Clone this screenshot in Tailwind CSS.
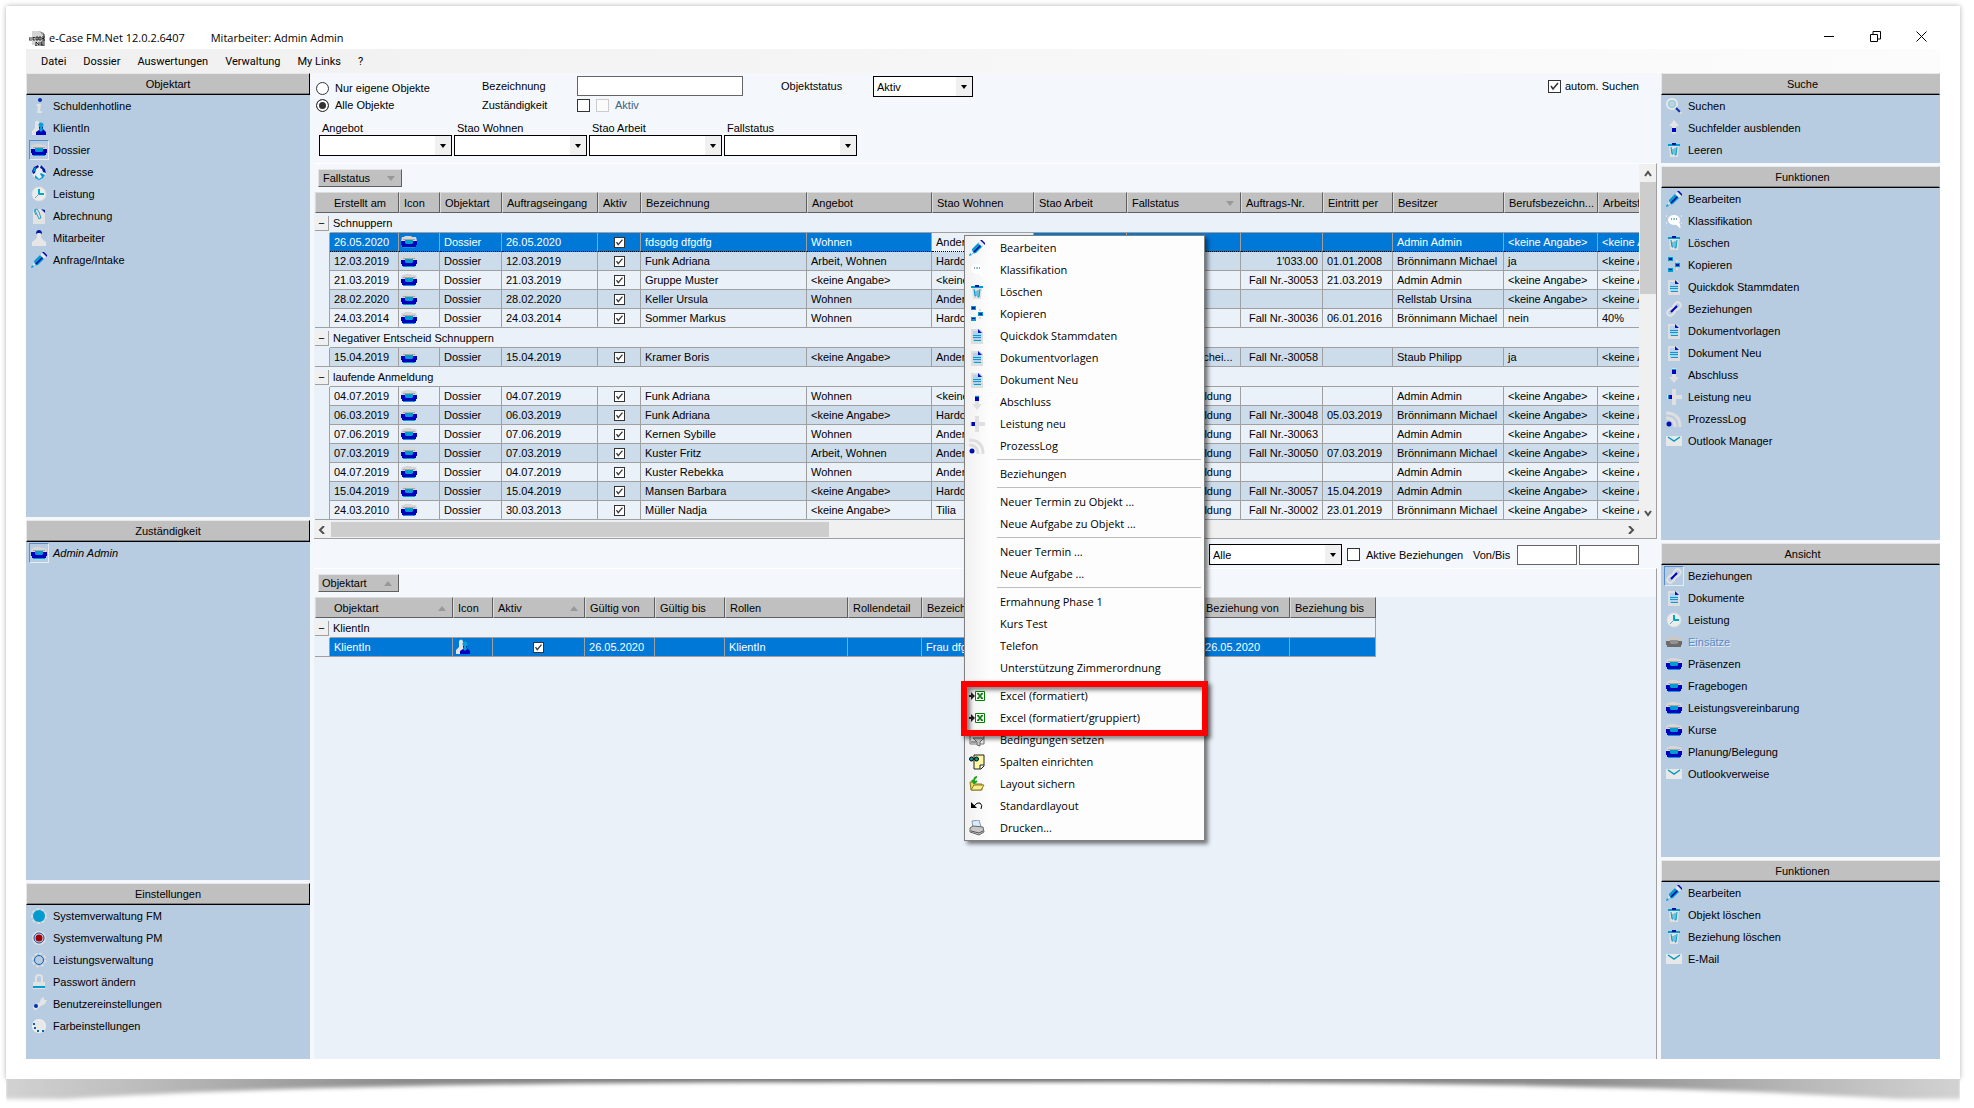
<!DOCTYPE html>
<html lang="de">
<head>
  <meta charset="UTF-8">
  <meta name="viewport" content="width=device-width, initial-scale=1.0">
  <title>e-Case FM.Net</title>
  <script src="https://cdn.jsdelivr.net/npm/@tailwindcss/browser@4"></script>
</head>
<body class="relative bg-white font-['Liberation_Sans',sans-serif] text-[11px] leading-4 text-black">

  <!-- Icons -->
  <svg class="hidden">
    <symbol id="i-app" viewBox="0 0 16 16"><path d="M3 1h8l4 4v10H3z" fill="#d4d4d4"/><path d="M10 1l5 5V3z" fill="#888"/><path d="M15 4v12H6" fill="none" stroke="#333"/><path d="M0 8h3M0 8v2h3M4 7.500h2M4 7v3h2M7 7h2v3H7zM10 7v3h2V7zM13 7h3M13 8.500h2M13 10h3M7 12v4M7 12l3 3v-3M12 12h2M12 14h2M12 12v3h2" stroke="#000" stroke-width=".8" fill="none"/></symbol>
    <symbol id="i-info" viewBox="0 0 16 16"><circle cx="9" cy="2" r="2" fill="#0a2fb0"/><path d="M6 6h4l-1 7h2v2H6l1-7H5z" fill="#e2e2e2"/></symbol>
    <symbol id="i-client" viewBox="0 0 16 16"><path d="M4 2q2-3 4 0v4l3 5v4H1v-4l3-3z" fill="#e4e4e4"/><circle cx="10" cy="5" r="2.500" fill="#0a9fd4"/><path d="M8 7h4v2l3 3v3H5v-3l3-2z" fill="#0000c0"/><path d="M9 7h2l1 3-2 2-2-2z" fill="#0a9fd4"/></symbol>
    <symbol id="i-folder" viewBox="0 0 16 16"><path d="M0 7l1-4h2l1-1h6l1 1h4l1 4z" fill="#d6d6d6"/><path d="M2 5h12v1H2z" fill="#a8a8a8"/><path d="M0 7h16v4h-1v2H1v-2H0z" fill="#0000c0"/><path d="M4 6h8v3l-1 1H5L4 9z" fill="#009cd0"/><path d="M2 13h12v1H2z" fill="#009cd0"/></symbol>
    <symbol id="i-folder-off" viewBox="0 0 16 16"><path d="M0 7l1-4h2l1-1h6l1 1h4l1 4z" fill="#c8c8c8"/><path d="M0 7h16v4h-1v2H1v-2H0z" fill="#6b6b6b"/><path d="M4 6h8v3l-1 1H5L4 9z" fill="#929292"/></symbol>
    <symbol id="i-globe" viewBox="0 0 16 16"><circle cx="8" cy="8" r="7" fill="#e8eef2"/><path d="M3 3l4-2 1 2-3 2-1 4-2 1-1-3zM10 1l4 4 1 4-3-1-1-3-2-1z" fill="#0018a8"/><path d="M4 11l4 4 3-2-2-3 1-1 4 2-2 3-4 2-4-2zM3 4l2-1-1 4-2 1z" fill="#009cd0"/></symbol>
    <symbol id="i-clock" viewBox="0 0 16 16"><circle cx="8" cy="8" r="7" fill="#ececec" stroke="#dcdcdc" stroke-dasharray="2 1"/><path d="M8 3v5h5" stroke="#00a8c0" stroke-width="2" fill="none"/><path d="M8 8l-4 4" stroke="#6ac"/></symbol>
    <symbol id="i-bill" viewBox="0 0 16 16"><path d="M2 1h9l3 3v12H2z" fill="#e2e2e2"/><path d="M10 1l4 1v3z" fill="#0018a8"/><path d="M4 2l4 9 2-1-2-6-2-3-3 1 2 5" fill="none" stroke="#2aa0c8"/></symbol>
    <symbol id="i-person" viewBox="0 0 16 16"><path d="M6 3h4v4l1 2 4 3v4H1v-4l4-3 1-2z" fill="#e6e6e6"/><path d="M5 4q0-4 3-4t3 4l-2-1H7z" fill="#0018a8"/></symbol>
    <symbol id="i-pen" viewBox="0 0 16 16"><path d="M3 9l7-7 4 4-7 7-4 1z" fill="#009cd0"/><path d="M5 12l7-7" stroke="#0000a0" stroke-width="1.500"/><path d="M9 3l2-2 4 4-2 2z" fill="#e8e8e8"/><path d="M11 0h2l3 3v2z" fill="#0000b0"/><path d="M3 10l-1 3 3 1" fill="#e8e8e8"/><path d="M0 16l1-3 2 2z" fill="#009cd0"/></symbol>
    <symbol id="i-search" viewBox="0 0 16 16"><circle cx="6" cy="6" r="5" fill="#b9d4e4" stroke="#e8e8e8" stroke-width="2"/><circle cx="6" cy="6" r="3.500" fill="none" stroke="#8cc"/><path d="M10 10l4 4" stroke="#1030b0" stroke-width="2"/><path d="M14 14l2 2" stroke="#ddd" stroke-width="2"/></symbol>
    <symbol id="i-up" viewBox="0 0 16 16"><path d="M8 0l5 6h-3v7H6V6H3z" fill="#e4e4e4"/><path d="M6 8h4v4H6z" fill="#0000c0"/><path d="M6 12h4v2H6z" fill="#dcdcdc"/></symbol>
    <symbol id="i-trash" viewBox="0 0 16 16"><path d="M3 3h10l-1 12H4z" fill="#e0e0e0"/><path d="M2 2h12v2H2z" fill="#009cd0"/><path d="M6 1h4v2H6z" fill="#0018a8"/><path d="M5 5l1 7h1V7M11 5l-1 8H9V6" stroke="#009cd0" fill="none"/></symbol>
    <symbol id="i-bubble" viewBox="0 0 16 16"><ellipse cx="8" cy="7" rx="6" ry="5" fill="#fff"/><path d="M10 11l4 4v-1l-1-4zM0 3h1M15 3h1M0 10h1M15 10h1" fill="#fff" stroke="#fff"/><path d="M5 6h1M10 6h1" stroke="#336"/><path d="M7 6h2" stroke="#00a0a0"/></symbol>
    <symbol id="i-copy" viewBox="0 0 16 16"><path d="M2 0h5v4H2zM2 11h5v4H2zM9 6h5v4H9z" fill="#009cd0"/><path d="M3 1h3v2H3zM3 12h3v1H3zM10 7h3v2h-3z" fill="#0018a8"/><path d="M11 3v2M11 11v2" stroke="#ddd" stroke-width="2"/></symbol>
    <symbol id="i-doc" viewBox="0 0 16 16"><path d="M2 1h9l3 3v12H2z" fill="#dedede"/><path d="M4 3h5l3 3v7H4z" fill="#b4d2f0"/><path d="M9 1l4 4H9z" fill="#0018b8"/><path d="M4 7.500h8M4 9.500h8M5 12.500h7" stroke="#009cd0"/></symbol>
    <symbol id="i-link" viewBox="0 0 16 16"><rect x="8" y="1" width="6" height="8" rx="3" transform="rotate(45 11 5)" fill="none" stroke="#e2e2e2" stroke-width="2"/><rect x="2" y="7" width="6" height="8" rx="3" transform="rotate(45 5 11)" fill="none" stroke="#e2e2e2" stroke-width="2"/><path d="M5 11l6-6" stroke="#0000c0" stroke-width="2"/></symbol>
    <symbol id="i-down" viewBox="0 0 16 16"><path d="M6 1h4v9h3l-5 6-5-6h3z" fill="#e0e0e0"/><path d="M6 3h4v4H6z" fill="#0000c0"/><path d="M6 2h4v1H6z" fill="#009cd0"/></symbol>
    <symbol id="i-plus" viewBox="0 0 16 16"><path d="M6 0h4v6h6v4h-6v6H6v-6H1V6h5z" fill="#e0e0e0"/><path d="M3 6h3v4H3z" fill="#0000c0"/><path d="M2 6h1v4H2z" fill="#009cd0"/></symbol>
    <symbol id="i-feed" viewBox="0 0 16 16"><path d="M0 2q14 0 14 14M0 7q9 0 9 9" fill="none" stroke="#dedede" stroke-width="3"/><circle cx="3" cy="13" r="2.500" fill="#0010b0"/></symbol>
    <symbol id="i-mail" viewBox="0 0 16 16"><path d="M0 3h16v10H0z" fill="#e8e8e8"/><path d="M2 4l6 4 6-4" fill="none" stroke="#009cc0" stroke-width="1.500"/></symbol>
    <symbol id="i-globe-fm" viewBox="0 0 16 16"><circle cx="8" cy="8" r="7" fill="none" stroke="#dcdcdc" stroke-width="2" stroke-dasharray="3 2"/><circle cx="8" cy="8" r="6" fill="#009cd0"/></symbol>
    <symbol id="i-globe-pm" viewBox="0 0 16 16"><circle cx="8" cy="8" r="7" fill="#e0e0e0"/><circle cx="8" cy="8" r="5" fill="#e0e0e0" stroke="#1040a0"/><circle cx="8" cy="8" r="3.500" fill="#a00000"/></symbol>
    <symbol id="i-ring" viewBox="0 0 16 16"><circle cx="8" cy="8" r="6.500" fill="none" stroke="#dcdcdc" stroke-width="2" stroke-dasharray="3 2"/><circle cx="8" cy="8" r="4.500" fill="#b8cce0" stroke="#1060b0"/></symbol>
    <symbol id="i-lock" viewBox="0 0 16 16"><path d="M5 9V4q0-3 3-3t3 3v5" fill="none" stroke="#e2e2e2" stroke-width="2"/><path d="M2 8h12v7H2z" fill="#e2e2e2"/><path d="M2 12h12v2H2z" fill="#009cd0"/></symbol>
    <symbol id="i-wrench" viewBox="0 0 16 16"><path d="M8 8l2-5 3-2v3h3l-2 4-4 2z" fill="#e4e4e4"/><path d="M3 13l6-5" stroke="#e4e4e4" stroke-width="4"/><circle cx="5" cy="10" r="2" fill="#0030b0"/></symbol>
    <symbol id="i-colors" viewBox="0 0 16 16"><circle cx="8" cy="8" r="5" fill="#e8e8e8"/><circle cx="8" cy="8" r="6" fill="none" stroke="#eee" stroke-width="2"/><path d="M2 6h2M3 10h2M6 13h2M11 13h2" stroke="#1060b0" stroke-width="2"/></symbol>
    <symbol id="i-excel" viewBox="0 0 16 16"><path d="M0 7h2V4l4 4-4 4V9H0z" fill="#222"/><path d="M6.500 3.500h9v9h-9z" fill="#fff" stroke="#008000"/><path d="M8 5h2l1 2 1-2h2v1l-2 2 2 2v1h-2l-1-2-1 2H8v-1l2-2-2-2z" fill="#108010"/></symbol>
    <symbol id="i-filter" viewBox="0 0 16 16"><path d="M1 2h14v10H1z" fill="#eee" stroke="#777"/><path d="M2 10h5" stroke="#444"/><path d="M4 6h11l-4 4v4l-3-1v-3z" fill="#ccc" stroke="#666"/></symbol>
    <symbol id="i-columns" viewBox="0 0 16 16"><path d="M5 1h10v11l-3 3H5z" fill="#fff8a0" stroke="#222"/><path d="M15 11h-4v4" fill="#fff" stroke="#222"/><circle cx="2.500" cy="5" r="2" fill="#00a0a0" stroke="#000"/><circle cx="7.500" cy="5" r="2" fill="#00a0a0" stroke="#000"/></symbol>
    <symbol id="i-save" viewBox="0 0 16 16"><path d="M1 6h4l1 2h7v6H2z" fill="#e8d868" stroke="#8a7a20"/><path d="M2 14l3-5h10l-3 5z" fill="#f6ee90" stroke="#8a7a20"/><path d="M8 1q-3 0-3 5M3 4l2 3 3-2" fill="none" stroke="#20a020" stroke-width="2"/></symbol>
    <symbol id="i-undo" viewBox="0 0 16 16"><path d="M2 4v6h6z" fill="#000"/><path d="M5 8q3-4 6-3 3 2 1 6" fill="none" stroke="#000"/></symbol>
    <symbol id="i-print" viewBox="0 0 16 16"><path d="M3 1l7-1 2 7-8 1z" fill="#d8ecfc" stroke="#89a"/><path d="M1 8l3-2 10 1 1 5-5 3-9-3z" fill="#c8c8c8" stroke="#666"/><path d="M2 11l8 2 4-2" fill="none" stroke="#555"/></symbol>
    <symbol id="i-tick" viewBox="0 0 13 13"><path d="M3 6l2 3 5-6" fill="none" stroke="#333" stroke-width="1.500"/></symbol>
    <symbol id="i-caret" viewBox="0 0 8 4"><path d="M1 0h6L4 4z" fill="#000"/></symbol>
    <symbol id="i-sort-down" viewBox="0 0 8 6"><path d="M0 1h8L4 6z" fill="#989898"/></symbol>
    <symbol id="i-sort-up" viewBox="0 0 8 6"><path d="M0 6h8L4 1z" fill="#989898"/></symbol>
  </svg>

  <div class="pt-1.5 pr-3.5 pl-1.5">
    <div class="flex min-h-[calc(100vh-35px)] flex-col bg-white px-5 pt-5 pb-5 shadow-[0_0_5px_rgba(0,0,0,0.3)]">

      <!-- Titelleiste -->
      <header class="flex h-[23px] items-center font-['Open_Sans',sans-serif] text-[11px]">
        <svg class="ml-[3px] size-4"><use href="#i-app"/></svg>
        <h1 class="ml-1 whitespace-pre">e-Case FM.Net 12.0.2.6407</h1>
        <span class="ml-[26px]">Mitarbeiter: Admin Admin</span>
        <div class="ml-auto flex items-center gap-[35px] pr-[13px] pb-0.5">
          <button aria-label="Minimieren"><svg class="size-[11px]" viewBox="0 0 11 11"><path d="M0 5.500h10" stroke="#000"/></svg></button>
          <button aria-label="Verkleinern"><svg class="size-[11px]" viewBox="0 0 11 11"><path d="M.5 3.500h7v7h-7zM3 3V.5h7.500V8H8" fill="none" stroke="#000"/></svg></button>
          <button aria-label="Schliessen"><svg class="size-[11px]" viewBox="0 0 11 11"><path d="M.5.5l10 10M10.500.5l-10 10" stroke="#000"/></svg></button>
        </div>
      </header>

      <!-- Menü -->
      <nav class="flex h-6 items-center gap-[17px] bg-linear-to-r from-[#f0f0f0] to-[#fcfcfc] pt-px pl-[15px] font-[Roboto,sans-serif] text-[11px]">
        <button>Datei</button>
        <button>Dossier</button>
        <button>Auswertungen</button>
        <button>Verwaltung</button>
        <button>My Links</button>
        <button>?</button>
      </nav>

      <div class="flex flex-1 bg-[#f4f8fc]">
        <!-- linke Leiste -->
        <aside id="left" class="flex w-[284px] shrink-0 flex-col gap-[3px]"></aside>

        <!-- Mitte -->
        <main class="flex min-w-0 flex-1 flex-col pl-1">
          <form class="h-[90px]">
            <div class="grid grid-cols-[166px_95px_204px_92px_100px_1fr] pt-[3px] pl-0.5">
              <label class="flex h-5 items-center gap-1.5 pt-1"><input type="radio" name="scope" class="size-[13px] appearance-none rounded-full border border-[#333] bg-white">Nur eigene Objekte</label>
              <label for="bez" class="pt-0.5">Bezeichnung</label>
              <input id="bez" type="text" class="h-5 w-[166px] border border-[#646464] bg-white px-1">
              <label for="status" class="pt-0.5">Objektstatus</label>
              <span class="relative h-[21px]">
                <select id="status" class="h-[21px] w-full appearance-none border border-black bg-white pl-[3px]"><option>Aktiv</option></select>
                <svg class="pointer-events-none absolute top-px right-px h-[19px] w-4 bg-[#f0f0f0] px-1"><use href="#i-caret" width="8" height="4" y="8"/></svg>
              </span>
              <label class="flex h-5 items-center justify-end gap-1 pr-[22px]">
                <span class="relative size-[13px]"><input type="checkbox" checked class="block size-[13px] appearance-none border border-[#333] bg-white"><svg class="pointer-events-none absolute inset-0 size-[13px]"><use href="#i-tick"/></svg></span>
                autom. Suchen
              </label>
              <label class="flex h-4 items-center gap-1.5"><input type="radio" name="scope" checked class="size-[13px] appearance-none rounded-full border border-[#333] bg-[#333] shadow-[inset_0_0_0_2px_#fff]">Alle Objekte</label>
              <label for="zust">Zuständigkeit</label>
              <span class="flex items-center gap-1.5">
                <input id="zust" type="checkbox" class="size-[13px] appearance-none border border-[#333] bg-white">
                <label class="flex items-center gap-1.5 text-[#41617f]"><input type="checkbox" disabled class="size-[13px] appearance-none border border-[#ccc] bg-[#fbfbfb]">Aktiv</label>
              </span>
            </div>
            <div id="filters" class="mt-[7px] flex gap-0.5 pl-[5px]"></div>
          </form>

          <!-- Objektliste -->
          <section class="mr-1 border-t border-r border-b border-t-white border-r-[#a0a0a0] border-b-[#a0a0a0]">
            <div class="flex">
              <div class="min-w-0 flex-1 overflow-hidden bg-[#eaf1f9]">
                <div class="flex h-7 items-center bg-[#f4f8fc] pl-1">
                  <button class="flex h-[18px] w-[84px] items-center justify-between border border-t-[#e4e4e4] border-r-[#606060] border-b-[#606060] border-l-[#e4e4e4] bg-[#c0c0c0] pr-1.5 pl-1">Fallstatus<svg class="h-1.5 w-2"><use href="#i-sort-down"/></svg></button>
                </div>
                <div class="h-[329px] overflow-hidden pl-px">
                  <table id="objects" class="w-[1343px] table-fixed border-separate border-spacing-0"></table>
                </div>
              </div>
              <div class="flex w-[17px] flex-col items-center bg-[#f0f0f0]">
                <svg class="h-[18px] w-2" viewBox="0 0 8 18"><path d="M1 12l3-4 3 4" fill="none" stroke="#505050" stroke-width="2"/></svg>
                <div class="h-28 w-4 bg-[#cdcdcd]"></div>
                <svg class="mt-auto h-[18px] w-2" viewBox="0 0 8 18"><path d="M1 8l3 4 3-4" fill="none" stroke="#505050" stroke-width="2"/></svg>
              </div>
            </div>
            <div class="flex h-[17px] items-center bg-[#f0f0f0] pr-5">
              <svg class="h-2 w-[17px]" viewBox="0 0 17 8"><path d="M10 0L6 4l4 4" fill="none" stroke="#505050" stroke-width="2"/></svg>
              <div class="h-[15px] w-[498px] bg-[#cdcdcd]"></div>
              <svg class="ml-auto h-2 w-[10px]" viewBox="0 0 10 8"><path d="M3 0l4 4-4 4" fill="none" stroke="#505050" stroke-width="2"/></svg>
            </div>
          </section>

          <div class="flex h-[29px] items-center justify-end pt-0.5 pr-[22px]">
            <span class="relative w-[133px]">
              <select aria-label="Ansicht" class="block h-[21px] w-full appearance-none border border-black bg-white pl-[3px]"><option>Alle</option></select>
              <svg class="pointer-events-none absolute top-px right-px h-[19px] w-4 bg-[#f0f0f0] px-1"><use href="#i-caret" width="8" height="4" y="8"/></svg>
            </span>
            <label class="ml-[5px] flex w-[126px] items-center gap-1.5"><input type="checkbox" class="size-[13px] appearance-none border border-[#333] bg-white">Aktive Beziehungen</label>
            <label for="von" class="w-11">Von/Bis</label>
            <input id="von" type="text" class="h-5 w-[60px] border border-[#646464] bg-white px-1">
            <input aria-label="Bis" type="text" class="ml-0.5 h-5 w-[60px] border border-[#646464] bg-white px-1">
          </div>

          <!-- Beziehungen -->
          <section class="mr-1 flex-1 overflow-hidden border-t border-r border-t-white border-r-[#a0a0a0] bg-[#eaf1f9]">
            <div class="flex h-7 items-center bg-[#f4f8fc] pl-1">
              <button class="flex h-[18px] w-[81px] items-center justify-between border border-t-[#e4e4e4] border-r-[#606060] border-b-[#606060] border-l-[#e4e4e4] bg-[#c0c0c0] pr-1.5 pl-[3px]">Objektart<svg class="h-1.5 w-2"><use href="#i-sort-up"/></svg></button>
            </div>
            <table id="relations" class="ml-px w-[1061px] table-fixed border-separate border-spacing-0"></table>
          </section>
        </main>

        <!-- rechte Leiste -->
        <aside id="right" class="flex w-[279px] shrink-0 flex-col gap-[3px]"></aside>
      </div>
    </div>

    <!-- Schatten unter der Seite -->
    <svg class="block h-[29px] w-full" viewBox="0 0 1962 29" preserveAspectRatio="none">
      <defs>
        <linearGradient id="curl">
          <stop offset="0" stop-color="#d2d2d2"/><stop offset=".07" stop-color="#bcbcbc"/><stop offset=".2" stop-color="#8c8c8c"/>
          <stop offset=".5" stop-color="#6c6c6c"/>
          <stop offset=".8" stop-color="#8c8c8c"/><stop offset=".93" stop-color="#bcbcbc"/><stop offset="1" stop-color="#d2d2d2"/>
        </linearGradient>
        <filter id="soft" x="-1%" width="102%" y="-20%" height="140%"><feGaussianBlur stdDeviation="1 2"/></filter>
      </defs>
      <path d="M0-8H1962V20H1900C1640 4 1300 3 981 3S320 4 60 20H0z" fill="url(#curl)" filter="url(#soft)"/>
    </svg>
  </div>

  <!-- Kontextmenü -->
  <div id="menu" role="menu" class="absolute top-[235px] left-[964px] w-[241px] border border-[#808080] bg-[#fdfdfd] bg-linear-to-r from-[#f1f1f1] from-0% to-[#fdfdfd] to-10% p-px font-['Open_Sans',sans-serif] text-[11px] shadow-[3px_3px_4px_rgba(0,0,0,0.5)]"></div>

  <script>
    const icon = (name, cls = 'size-4') => `<svg class="${cls} shrink-0"><use href="#i-${name}"/></svg>`;

    // Seitenleisten: Titel, Höhe, Einträge [Icon, Text, Zustand]
    const leftPanels = [
      ['Objektart', 'h-[444px]', [['info', 'Schuldenhotline'], ['client', 'KlientIn'], ['folder', 'Dossier', 'on'], ['globe', 'Adresse'], ['clock', 'Leistung'], ['bill', 'Abrechnung'], ['person', 'Mitarbeiter'], ['pen', 'Anfrage/Intake']]],
      ['Zuständigkeit', 'flex-1', [['folder', '<i>Admin Admin</i>', 'on']]],
      ['Einstellungen', 'h-[176px]', [['globe-fm', 'Systemverwaltung FM'], ['globe-pm', 'Systemverwaltung PM'], ['ring', 'Leistungsverwaltung'], ['lock', 'Passwort ändern'], ['wrench', 'Benutzereinstellungen'], ['colors', 'Farbeinstellungen']]],
    ];
    const rightPanels = [
      ['Suche', 'h-[90px]', [['search', 'Suchen'], ['up', 'Suchfelder ausblenden'], ['trash', 'Leeren']]],
      ['Funktionen', 'h-[374px]', [['pen', 'Bearbeiten'], ['bubble', 'Klassifikation'], ['trash', 'Löschen'], ['copy', 'Kopieren'], ['doc', 'Quickdok Stammdaten'], ['link', 'Beziehungen'], ['doc', 'Dokumentvorlagen'], ['doc', 'Dokument Neu'], ['down', 'Abschluss'], ['plus', 'Leistung neu'], ['feed', 'ProzessLog'], ['mail', 'Outlook Manager']]],
      ['Ansicht', 'flex-1', [['link', 'Beziehungen', 'on'], ['doc', 'Dokumente'], ['clock', 'Leistung'], ['folder-off', 'Einsätze', 'off'], ['folder', 'Präsenzen'], ['folder', 'Fragebogen'], ['folder', 'Leistungsvereinbarung'], ['folder', 'Kurse'], ['folder', 'Planung/Belegung'], ['mail', 'Outlookverweise']]],
      ['Funktionen', 'h-[199px]', [['pen', 'Bearbeiten'], ['trash', 'Objekt löschen'], ['trash', 'Beziehung löschen'], ['mail', 'E-Mail']]],
    ];

    function renderPanels(id, panels, headCls) {
      document.getElementById(id).innerHTML = panels.map(([title, height, items]) => `
        <section class="${height} bg-[#b8cce1]">
          <h2 class="h-[22px] border border-t-[#e8e8e8] border-b-black border-l-[#e8e8e8] bg-[#c0c0c0] text-center leading-5 shadow-[inset_0_-1px_#808080] ${headCls}">${title}</h2>
          <ul>
            ${items.map(([ic, text, state]) => `
              <li><button ${state === 'off' ? 'disabled' : ''} class="flex h-[22px] items-center gap-1 pl-[3px]">
                <span class="flex h-5 w-5 items-center justify-center border ${state === 'on' ? 'border-t-[#5a8cc8] border-r-[#e4ecf6] border-b-[#e4ecf6] border-l-[#5a8cc8]' : 'border-transparent'}">${icon(ic)}</span>
                <span class="${state === 'off' ? 'text-[#5a8cc8] [text-shadow:1px_1px_#e4ecf6]' : ''}">${text}</span>
              </button></li>`).join('')}
          </ul>
        </section>`).join('');
    }
    renderPanels('left', leftPanels, 'border-r-black');
    renderPanels('right', rightPanels, 'border-r-[#c0c0c0] pl-1');

    document.getElementById('filters').innerHTML = ['Angebot', 'Stao Wohnen', 'Stao Arbeit', 'Fallstatus'].map((name, i) => `
      <div class="w-[133px]">
        <label for="f${i}" class="block h-[15px] pl-[3px]">${name}</label>
        <span class="relative block">
          <select id="f${i}" class="block h-[21px] w-full appearance-none border border-black bg-white"><option></option></select>
          <svg class="pointer-events-none absolute top-px right-px h-[19px] w-4 bg-[#f0f0f0] px-1"><use href="#i-caret" width="8" height="4" y="8"/></svg>
        </span>
      </div>`).join('');

    // Tabellen
    const K = '&lt;keine Angabe&gt;';
    const BM = 'Brönnimann Michael', AA = 'Admin Admin', LA = 'laufende Anmeldung';
    const objectCols = [['Erstellt am', 69], ['Icon', 41], ['Objektart', 62], ['Auftragseingang', 96], ['Aktiv', 43], ['Bezeichnung', 166], ['Angebot', 125], ['Stao Wohnen', 102], ['Stao Arbeit', 93], ['Fallstatus', 114, 'down'], ['Auftrags-Nr.', 82], ['Eintritt per', 70], ['Besitzer', 111], ['Berufsbezeichn...', 94], ['Arbeitsfähigkeit', 60]];
    const obj = (date, start, name, offer, home, status, nr, entry, owner, job, work = K) =>
      [date, '@folder', 'Dossier', start, '@check', name, offer, home, '', status, nr, entry, owner, job, work];
    const objectGroups = [
      ['Schnuppern', [
        obj('26.05.2020', '26.05.2020', 'fdsgdg dfgdfg', 'Wohnen', 'Andere', 'Schnuppern', '', '', AA, K),
        obj('12.03.2019', '12.03.2019', 'Funk Adriana', 'Arbeit, Wohnen', 'Hardo', 'Schnuppern', "1'033.00", '01.01.2008', BM, 'ja'),
        obj('21.03.2019', '21.03.2019', 'Gruppe Muster', K, K, 'Schnuppern', 'Fall Nr.-30053', '21.03.2019', AA, K),
        obj('28.02.2020', '28.02.2020', 'Keller Ursula', 'Wohnen', 'Andere', 'Schnuppern', '', '', 'Rellstab Ursina', K),
        obj('24.03.2014', '24.03.2014', 'Sommer Markus', 'Wohnen', 'Hardo', 'Schnuppern', 'Fall Nr.-30036', '06.01.2016', BM, 'nein', '40%'),
      ]],
      ['Negativer Entscheid Schnuppern', [
        obj('15.04.2019', '15.04.2019', 'Kramer Boris', K, 'Andere', 'Negativer Entschei...', 'Fall Nr.-30058', '', 'Staub Philipp', 'ja'),
      ]],
      ['laufende Anmeldung', [
        obj('04.07.2019', '04.07.2019', 'Funk Adriana', 'Wohnen', K, LA, '', '', AA, K),
        obj('06.03.2019', '06.03.2019', 'Funk Adriana', K, 'Hardo', LA, 'Fall Nr.-30048', '05.03.2019', BM, K),
        obj('07.06.2019', '07.06.2019', 'Kernen Sybille', 'Wohnen', 'Andere', LA, 'Fall Nr.-30063', '', AA, K),
        obj('07.03.2019', '07.03.2019', 'Kuster Fritz', 'Arbeit, Wohnen', 'Andere', LA, 'Fall Nr.-30050', '07.03.2019', BM, K),
        obj('04.07.2019', '04.07.2019', 'Kuster Rebekka', 'Wohnen', 'Andere', LA, '', '', AA, K),
        obj('15.04.2019', '15.04.2019', 'Mansen Barbara', K, 'Hardo', LA, 'Fall Nr.-30057', '15.04.2019', AA, K),
        obj('24.03.2010', '30.03.2013', 'Müller Nadja', K, 'Tilia', LA, 'Fall Nr.-30002', '23.01.2019', BM, K),
      ]],
    ];
    const relationCols = [['Objektart', 123, 'up'], ['Icon', 40], ['Aktiv', 92, 'up'], ['Gültig von', 70], ['Gültig bis', 70], ['Rollen', 123], ['Rollendetail', 74], ['Bezeichnung', 279], ['Beziehung von', 89], ['Beziehung bis', 86]];
    const relationGroups = [['KlientIn', [['KlientIn', '@client', '@check', '26.05.2020', '', 'KlientIn', '', 'Frau dfgdfg', '26.05.2020', '']]]];

    function cell(value) {
      if (value === '@check') return `<span class="relative mx-auto block size-[11px]"><input type="checkbox" checked aria-label="Aktiv" class="block size-[11px] appearance-none border border-[#333] bg-white"><svg class="pointer-events-none absolute inset-0 size-[11px]"><use href="#i-tick"/></svg></span>`;
      if (value[0] === '@') return icon(value.slice(1), '-ml-0.5 block size-4');
      return value;
    }

    function renderTable(id, cols, groups, current) {
      const head = cols.map(([name, , sort], i) => `
        <th ${i === 0 ? 'colspan="2"' : ''} class="h-[21px] overflow-hidden border border-t-[#dcdcdc] border-r-[#606060] border-b-[#606060] border-l-[#dcdcdc] bg-[#c0c0c0] p-0 ${i === 0 ? 'pl-[18px]' : 'pl-1'} text-left font-normal whitespace-nowrap">
          <span class="flex items-center justify-between pr-1.5">${name}${sort ? icon('sort-' + sort, 'h-1.5 w-2') : ''}</span>
        </th>`).join('');
      const body = groups.map(([title, rows]) => `
        <tr>
          <td class="h-5 p-0 align-middle"><button aria-label="Zuklappen" class="block h-[15px] w-[14px] border-r border-b border-[#a0a0a0] bg-[#f0f0f0] text-center leading-3">−</button></td>
          <td colspan="${cols.length}" class="h-5 border-r border-b border-[#a0a0a0] p-0 pl-[3px]">${title}</td>
        </tr>
        ${rows.map((row, r) => {
          const selected = title === groups[0][0] && r === 0;
          return `<tr class="${selected ? 'bg-[#0078d7] text-white' : r % 2 === (title === 'Negativer Entscheid Schnuppern' ? 0 : 1) ? 'bg-[#ccdceb]' : 'bg-[#eaf1f9]'}">
            <td class="border-r border-[#a0a0a0] bg-[#eaf1f9] p-0 ${r === rows.length - 1 ? 'border-b' : ''}"></td>
            ${row.map((v, c) => `<td class="h-[19px] overflow-hidden border-r border-b ${selected && current ? 'border-b-black border-r-[#a0a0a0] [border-bottom-style:dotted]' : 'border-[#a0a0a0]'} p-0 px-1 whitespace-nowrap ${cols[c][0] === 'Auftrags-Nr.' ? 'text-right' : ''} ${selected && c === current ? 'bg-[#eaf1f9] text-black' : ''}">${cell(v)}</td>`).join('')}
          </tr>`;
        }).join('')}`).join('');
      document.getElementById(id).innerHTML =
        `<colgroup><col style="width:15px">${cols.map(c => `<col style="width:${c[1]}px">`).join('')}</colgroup><thead><tr>${head}</tr></thead><tbody>${body}</tbody>`;
    }
    renderTable('objects', objectCols, objectGroups, 7);
    renderTable('relations', relationCols, relationGroups);

    // Kontextmenü, Gruppen durch Trennlinien getrennt
    const item = ([ic, text]) => `
      <button role="menuitem" class="flex h-[22px] w-full items-center pl-[3px] text-left"><span class="w-[31px]">${ic ? icon(ic) : ''}</span>${text}</button>`;
    const sep = '<hr class="my-0.5 mr-0.5 ml-[31px] h-0.5 border-t border-[#bdbdbd]">';
    const menuGroups = [
      [['pen', 'Bearbeiten'], ['bubble', 'Klassifikation'], ['trash', 'Löschen'], ['copy', 'Kopieren'], ['doc', 'Quickdok Stammdaten'], ['doc', 'Dokumentvorlagen'], ['doc', 'Dokument Neu'], ['down', 'Abschluss'], ['plus', 'Leistung neu'], ['feed', 'ProzessLog']],
      [['', 'Beziehungen']],
      [['', 'Neuer Termin zu Objekt ...'], ['', 'Neue Aufgabe zu Objekt ...']],
      [['', 'Neuer Termin ...'], ['', 'Neue Aufgabe ...']],
      [['', 'Ermahnung Phase 1'], ['', 'Kurs Test'], ['', 'Telefon'], ['', 'Unterstützung Zimmerordnung']],
    ];
    document.getElementById('menu').innerHTML = menuGroups.map(g => g.map(item).join('')).join(sep) + sep + `
      <div class="relative">
        ${[['excel', 'Excel (formatiert)'], ['excel', 'Excel (formatiert/gruppiert)']].map(item).join('')}
        <div class="pointer-events-none absolute -inset-x-[5px] -top-1 -bottom-[7px] border-[6px] border-[#ff0000] drop-shadow-[3px_3px_2px_rgba(0,0,0,0.5)]"></div>
      </div>` +
      [['filter', 'Bedingungen setzen'], ['columns', 'Spalten einrichten'], ['save', 'Layout sichern'], ['undo', 'Standardlayout'], ['print', 'Drucken...']].map(item).join('');
  </script>
</body>
</html>
